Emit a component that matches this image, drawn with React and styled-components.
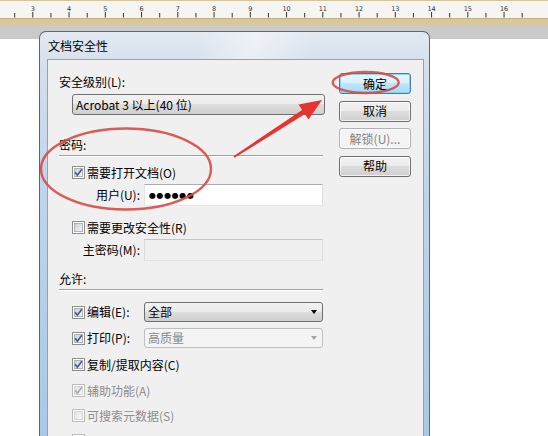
import React, { useId } from "react";
import styled, { createGlobalStyle } from "styled-components";

const GlobalStyle = createGlobalStyle`
  body {
    margin: 0;
    background: #fff;
  }
`;

const Page = styled.div`
  position: relative;
  width: 548px;
  height: 436px;
  overflow: hidden;
  background: #fff;
  font-family: "Noto Sans CJK SC", "Noto Sans", sans-serif;
  font-size: 12px;
  color: #000;
`;

const RulerSvg = styled.svg`
  display: block;
`;

const Workspace = styled.div`
  height: 411px;
  padding: 6px 0 0 39px;
  box-sizing: border-box;
  background: linear-gradient(#cacaca 0, #cacaca 14px, #fff 14px);
`;

const Dialog = styled.div`
  width: 391px;
  height: 420px;
  box-sizing: border-box;
  border: 1px solid #56687c;
  border-bottom: none;
  border-radius: 7px 7px 0 0;
  padding: 0 5px 0 7px;
  background: linear-gradient(
    to bottom,
    #e2e9f1 0,
    #d3dfeb 40px,
    #bfd5ec 150px,
    #a9c7e6 100%
  );
`;

const TitleBar = styled.div`
  height: 27px;
  display: flex;
  align-items: center;
  padding-left: 1px;
  background: linear-gradient(
    100deg,
    transparent 40%,
    rgba(255, 255, 255, 0.45) 55%,
    transparent 70%
  );
`;

const Client = styled.div`
  display: flex;
  height: 400px;
  box-sizing: border-box;
  padding: 13px 0 0 11px;
  background: #f0f0f0;
  border: 1px solid #8fa3b8;
  border-bottom: none;
`;

const FormColumn = styled.div`
  width: 268px;
  padding-top: 1px;
  display: flex;
  flex-direction: column;
`;

const ButtonColumn = styled.div`
  margin-left: 12px;
  width: 72px;
  display: flex;
  flex-direction: column;
  gap: 6.5px;
`;

const SectionLabel = styled.div`
  line-height: 16px;
  margin-top: ${(p) => p.$mt || 0}px;
`;

const Separator = styled.div`
  margin-top: 2px;
  width: 264px;
  border-top: 1px solid #a0a0a0;
  border-bottom: 1px solid #fff;
`;

const ComboBox = styled.div`
  display: flex;
  align-items: center;
  justify-content: space-between;
  width: ${(p) => p.$w}px;
  height: ${(p) => p.$h}px;
  margin-left: ${(p) => p.$ml || 0}px;
  margin-top: ${(p) => p.$mt || 0}px;
  box-sizing: border-box;
  padding: 0 5px 0 3px;
  border: 1px solid ${(p) => (p.$disabled ? "#bcc0c3" : "#707070")};
  border-radius: 3px;
  color: ${(p) => (p.$disabled ? "#8a8a8a" : "#000")};
  background: ${(p) =>
    p.$disabled
      ? "#f4f4f4"
      : "linear-gradient(to bottom, #f2f2f2 0%, #ebebeb 49%, #dddddd 50%, #cfcfcf 100%)"};
  line-height: 16px;
`;

const Arrow = styled.span`
  width: 0;
  height: 0;
  border-left: 3.5px solid transparent;
  border-right: 3.5px solid transparent;
  border-top: 4px solid ${(p) => (p.$disabled ? "#a6a6a6" : "#000")};
`;

const CheckRow = styled.div`
  display: flex;
  align-items: center;
  gap: 2px;
  height: 17px;
  padding-left: 13px;
  margin-top: ${(p) => p.$mt || 0}px;
  color: ${(p) => (p.$disabled ? "#8d8d8d" : "#000")};
  line-height: 16px;
`;

const OptionRow = styled.div`
  display: flex;
  align-items: center;
  padding-left: 13px;
  margin-top: ${(p) => p.$mt || 0}px;
`;

const OptionLabel = styled.div`
  display: flex;
  align-items: center;
  gap: 2px;
  width: 72px;
  line-height: 16px;
`;

const FieldRow = styled.div`
  display: flex;
  align-items: center;
  padding-left: 13px;
  margin-top: 3px;
`;

const FieldLabel = styled.span`
  width: 68px;
  margin-right: 4px;
  text-align: right;
  line-height: 16px;
`;

const TextBox = styled.div`
  display: flex;
  align-items: center;
  width: 179px;
  height: 22px;
  box-sizing: border-box;
  padding-left: 4px;
  border: 1px solid;
  border-color: ${(p) =>
    p.$disabled ? "#c5c5c5 #dcdcdc #e3e3e3 #dcdcdc" : "#abadb3 #dbdfe6 #e3e9ef #e2e3ea"};
  background: ${(p) => (p.$disabled ? "#f0f0f0" : "#fff")};
`;

const Dots = styled.span`
  font-family: "DejaVu Sans", sans-serif;
  font-size: 8px;
  letter-spacing: 0.6px;
  color: #000;
`;

const Button = styled.button`
  width: 72px;
  height: 21px;
  padding: 0;
  box-sizing: border-box;
  font-family: "Noto Sans CJK SC", "Noto Sans", sans-serif;
  font-size: 12px;
  line-height: 16px;
  border-radius: 3px;
  border: 1px solid
    ${(p) => (p.$primary ? "#3c7fb1" : p.disabled ? "#adb2b5" : "#707070")};
  color: ${(p) => (p.disabled ? "#838383" : "#000")};
  background: ${(p) =>
    p.$primary
      ? "linear-gradient(to bottom, #eaf6fd 0%, #d9f0fc 49%, #bee6fd 50%, #a7d9f5 100%)"
      : p.disabled
      ? "#f4f4f4"
      : "linear-gradient(to bottom, #f2f2f2 0%, #ebebeb 49%, #dddddd 50%, #cfcfcf 100%)"};
  box-shadow: inset 0 0 0 1px
    ${(p) => (p.$primary ? "rgba(120, 210, 250, 0.8)" : "rgba(255, 255, 255, 0.7)")};
`;

const Overlay = styled.svg`
  position: absolute;
  top: 0;
  left: 0;
  pointer-events: none;
`;

const CheckBox = ({ checked, disabled }) => {
  const id = useId();
  return (
    <svg width="13" height="13" viewBox="0 0 13 13">
      <defs>
        <linearGradient id={id} x1="0" y1="0" x2="1" y2="1">
          <stop offset="0" stopColor={disabled ? "#e4e4e4" : "#cbcfd5"} />
          <stop offset="1" stopColor="#f7f7f7" />
        </linearGradient>
      </defs>
      <rect x="0.5" y="0.5" width="12" height="12" fill="#fff" stroke={disabled ? "#bcbcbc" : "#8e8f8f"} />
      <rect x="2.5" y="2.5" width="8" height="8" fill={`url(#${id})`} stroke={disabled ? "#d6d6d6" : "#aeb3b9"} />
      {checked && (
        <path
          d="M3.2 6.4 L5.4 9.2 L9.8 3.2"
          fill="none"
          stroke={disabled ? "#a8a8a8" : "#4a5a8a"}
          strokeWidth="1.7"
        />
      )}
    </svg>
  );
};

const Ruler = () => {
  const majors = [];
  for (let n = 3; n <= 16; n++) majors.push({ n, x: 32.3 + 36.25 * (n - 3) });
  const minors = [];
  for (let k = 0; k < 16; k++) minors.push(14.2 + 36.25 * k);
  return (
    <RulerSvg width="548" height="25" viewBox="0 0 548 25">
      <rect x="0" y="0" width="548" height="25" fill="#f5f5f2" />
      <rect x="0" y="0" width="548" height="1" fill="#d6c59c" />
      <rect x="0" y="18" width="548" height="7" fill="#d9c79d" />
      <rect x="0" y="18" width="548" height="1" fill="#c3b186" />
      {minors.map((x) => (
        <rect key={`m${x}`} x={x} y="13" width="1" height="4.5" fill="#333" />
      ))}
      {majors.map(({ n, x }) => (
        <g key={n}>
          <rect x={x} y="12" width="1" height="5.5" fill="#333" />
          <text
            x={x + 0.5}
            y="10.5"
            fontSize="6.5"
            textAnchor="middle"
            fill="#333"
            fontFamily="DejaVu Sans, sans-serif"
          >
            {n}
          </text>
        </g>
      ))}
    </RulerSvg>
  );
};

const Annotations = () => (
  <Overlay width="548" height="436" viewBox="0 0 548 436">
    <ellipse cx="365.7" cy="82.5" rx="33" ry="10.5" fill="none" stroke="#d84a44" strokeWidth="2.4" opacity="0.9" />
    <ellipse cx="126" cy="169" rx="85" ry="40.5" fill="none" stroke="#d84a44" strokeWidth="2.4" opacity="0.9" />
    <polygon
      points="233.5,156.2 302.1,109.9 298.6,104.4 322,100 308.4,119.6 304.9,114.1 234.5,157.8"
      fill="#e8322d"
    />
  </Overlay>
);

const App = () => (
  <Page>
    <GlobalStyle />
    <Ruler />
    <Workspace>
      <Dialog>
        <TitleBar>文档安全性</TitleBar>
        <Client>
          <FormColumn>
            <SectionLabel>安全级别(L):</SectionLabel>
            <ComboBox $w={253} $h={21} $ml={13} $mt={4}>
              <span>Acrobat 3 以上(40 位)</span>
              <Arrow />
            </ComboBox>

            <SectionLabel $mt={22}>密码:</SectionLabel>
            <Separator />
            <CheckRow $mt={7}>
              <CheckBox checked />
              <span>需要打开文档(O)</span>
            </CheckRow>
            <FieldRow>
              <FieldLabel>用户(U):</FieldLabel>
              <TextBox>
                <Dots>●●●●●●</Dots>
              </TextBox>
            </FieldRow>
            <CheckRow $mt={13}>
              <CheckBox />
              <span>需要更改安全性(R)</span>
            </CheckRow>
            <FieldRow>
              <FieldLabel>主密码(M):</FieldLabel>
              <TextBox $disabled />
            </FieldRow>

            <SectionLabel $mt={10}>允许:</SectionLabel>
            <Separator />
            <OptionRow $mt={11}>
              <OptionLabel>
                <CheckBox checked />
                <span>编辑(E):</span>
              </OptionLabel>
              <ComboBox $w={179} $h={20}>
                <span>全部</span>
                <Arrow />
              </ComboBox>
            </OptionRow>
            <OptionRow $mt={6}>
              <OptionLabel>
                <CheckBox checked />
                <span>打印(P):</span>
              </OptionLabel>
              <ComboBox $w={179} $h={20} $disabled>
                <span>高质量</span>
                <Arrow $disabled />
              </ComboBox>
            </OptionRow>
            <CheckRow $mt={8}>
              <CheckBox checked />
              <span>复制/提取内容(C)</span>
            </CheckRow>
            <CheckRow $mt={9} $disabled>
              <CheckBox checked disabled />
              <span>辅助功能(A)</span>
            </CheckRow>
            <CheckRow $mt={8} $disabled>
              <CheckBox disabled />
              <span>可搜索元数据(S)</span>
            </CheckRow>
            <CheckRow $mt={8} $disabled>
              <CheckBox disabled />
            </CheckRow>
          </FormColumn>

          <ButtonColumn>
            <Button $primary>确定</Button>
            <Button>取消</Button>
            <Button disabled>解锁(U)...</Button>
            <Button>帮助</Button>
          </ButtonColumn>
        </Client>
      </Dialog>
    </Workspace>
    <Annotations />
  </Page>
);

export default App;
